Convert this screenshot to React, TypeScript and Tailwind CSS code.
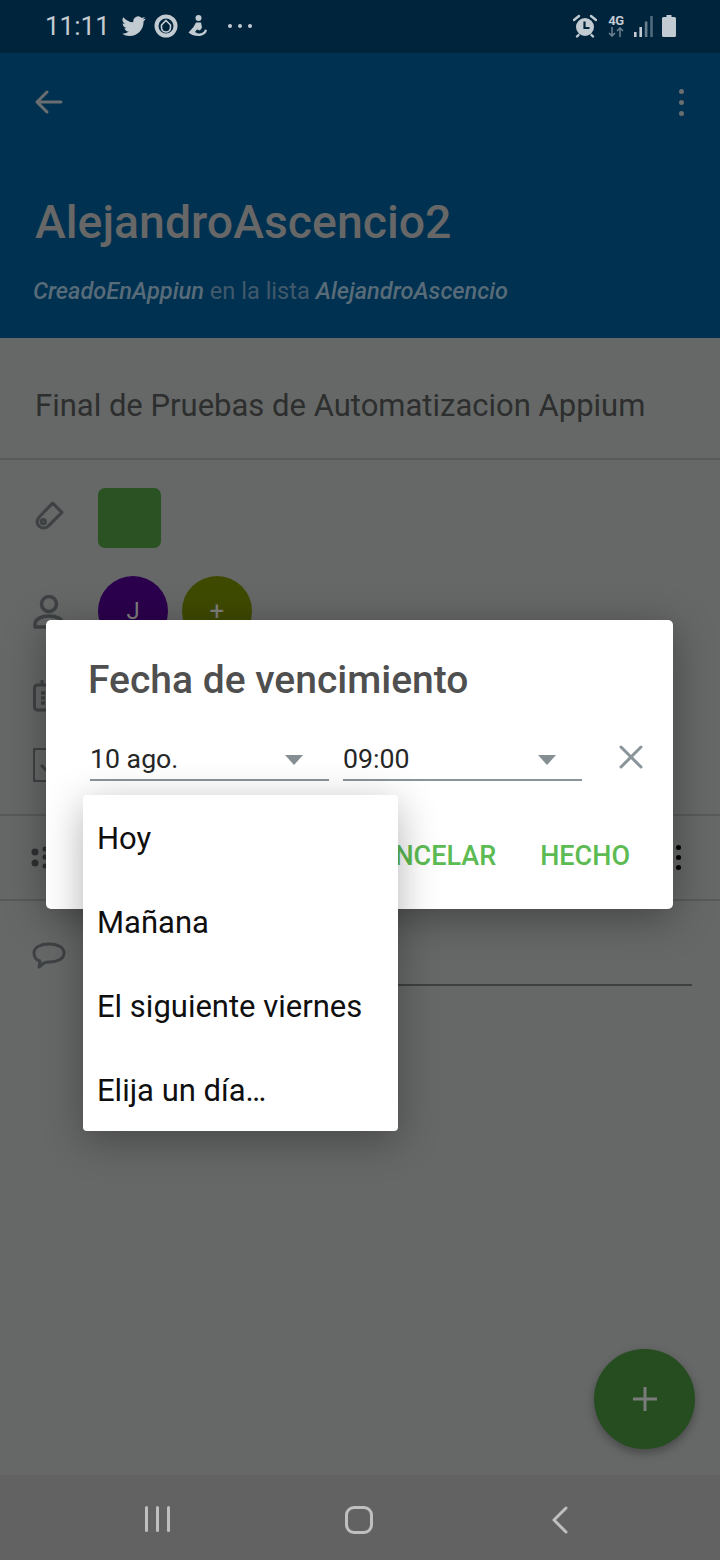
const menuItems = ['Hoy', 'Mañana', 'El siguiente viernes', 'Elija un día…'];

function TwitterIcon() {
  return (
    <svg width="24" height="24" viewBox="0 0 24 24" fill="#c3cbd2">
      <path d="M23.500 4.600c-.9.400-1.800.650-2.800.800 1-.6 1.750-1.550 2.100-2.700-.95.550-2 .95-3.100 1.200a4.900 4.900 0 0 0-8.350 4.450C7.300 8.150 3.700 6.200 1.300 3.250a4.900 4.900 0 0 0 1.500 6.550c-.8 0-1.550-.25-2.200-.6v.05c0 2.400 1.700 4.400 3.950 4.850-.7.200-1.500.2-2.200.1.600 1.950 2.450 3.400 4.600 3.400A9.900 9.900 0 0 1 0 19.650 13.900 13.900 0 0 0 7.550 21.900c9.050 0 14-7.500 14-14v-.6c.95-.7 1.800-1.550 1.950-2.700z" />
    </svg>
  );
}

function ChatAppIcon() {
  return (
    <svg width="24" height="24" viewBox="0 0 24 24" fill="none">
      <circle cx="12" cy="12" r="9.500" stroke="#c3cbd2" strokeWidth="4" />
      <path d="M12 6.500l4.500 4.500v2.500a4.500 4.500 0 0 1-9 0V11z" stroke="#c3cbd2" strokeWidth="1.600" fill="none" />
    </svg>
  );
}

function PersonAppIcon() {
  return (
    <svg width="20" height="24" viewBox="0 0 20 24" fill="#c3cbd2">
      <circle cx="10.500" cy="4" r="3" />
      <path d="M8 8.500h5l1 5-2 3-3-1-2 2.500 3 1.500c3 .5 6-1 7-4l2 .5c-.5 3.500-4 6-8.500 6-3.500 0-7.500-1-10-3.500l5-5.500z" />
    </svg>
  );
}

function AlarmIcon() {
  return (
    <svg width="24" height="24" viewBox="0 0 24 24" fill="none">
      <path d="M1 6l5-4M23 6l-5-4" stroke="#c3cbd2" strokeWidth="2.400" strokeLinecap="round" />
      <path d="M5.500 21l-1.500 1.500M18.500 21l1.500 1.500" stroke="#c3cbd2" strokeWidth="2.400" strokeLinecap="round" />
      <circle cx="12" cy="13" r="9" fill="#c3cbd2" />
      <path d="M11.500 7.500V14h5" stroke="#00243c" strokeWidth="2.200" />
    </svg>
  );
}

function SignalBars() {
  return (
    <svg width="19" height="21" viewBox="0 0 19 21">
      <rect x="0" y="16" width="2.600" height="5" fill="#c3cbd2" />
      <rect x="5.400" y="11" width="2.600" height="10" fill="#c3cbd2" />
      <rect x="10.800" y="5.500" width="2.600" height="15.500" fill="#6d8090" />
      <rect x="16.200" y="0" width="2.600" height="21" fill="#4f6a7d" />
    </svg>
  );
}

function BatteryIcon() {
  return (
    <svg width="14" height="22" viewBox="0 0 14 22" fill="#c3cbd2">
      <path d="M4.500 0h5v2H12.500a1.500 1.500 0 0 1 1.500 1.500V20.500a1.500 1.500 0 0 1-1.500 1.500H1.500A1.500 1.500 0 0 1 0 20.500V3.500A1.500 1.500 0 0 1 1.500 2H4.500z" />
    </svg>
  );
}

function NetworkBadge() {
  return (
    <div className="flex flex-col items-center w-[16px]">
      <span className="text-[13px] leading-[12px] font-bold text-[#c3cbd2] tracking-[-0.5px]">4G</span>
      <svg width="16" height="10" viewBox="0 0 16 10" fill="none" stroke="#6d8090" strokeWidth="1.500">
        <path d="M4 0v9M1 6l3 3 3-3M12 10V1M9 4l3-3 3 3" />
      </svg>
    </div>
  );
}

function StatusBar() {
  return (
    <div className="h-[53px] shrink-0 bg-[#00243c] flex items-center justify-between pl-[45px] pr-[44px] pb-[1px]">
      <div className="flex items-center">
        <span className="text-[26px] text-[#c3cbd2] w-[77px]">11:11</span>
        <TwitterIcon />
        <div className="ml-[8px]"><ChatAppIcon /></div>
        <div className="ml-[10px]"><PersonAppIcon /></div>
        <div className="ml-[20px] flex gap-[6px]">
          <div className="w-[4px] h-[4px] rounded-full bg-[#c3cbd2]" />
          <div className="w-[4px] h-[4px] rounded-full bg-[#c3cbd2]" />
          <div className="w-[4px] h-[4px] rounded-full bg-[#c3cbd2]" />
        </div>
      </div>
      <div className="flex items-center">
        <AlarmIcon />
        <div className="ml-[11px]"><NetworkBadge /></div>
        <div className="ml-[10px]"><SignalBars /></div>
        <div className="ml-[9px]"><BatteryIcon /></div>
      </div>
    </div>
  );
}

function Header() {
  return (
    <div className="h-[285px] shrink-0 bg-[#003150] px-[36px] flex flex-col">
      <div className="h-[98px] flex items-center justify-between">
        <svg width="30" height="26" viewBox="0 0 30 26" fill="none" stroke="#6b6e70" strokeWidth="3" strokeLinecap="round" strokeLinejoin="round" className="ml-[-2px]">
          <path d="M27 13H3M13 3L3 13l10 10" />
        </svg>
        <div className="flex flex-col gap-[6px]">
          <div className="w-[5px] h-[5px] rounded-full bg-[#6b6e70]" />
          <div className="w-[5px] h-[5px] rounded-full bg-[#6b6e70]" />
          <div className="w-[5px] h-[5px] rounded-full bg-[#6b6e70]" />
        </div>
      </div>
      <div className="mt-[41px] text-[46.400px] leading-[60px] font-medium text-[#676767] ml-[-1px]">AlejandroAscencio2</div>
      <div className="mt-[24px] text-[23.600px] leading-[30px] text-[#42596c] ml-[-3px]">
        <span className="italic font-medium text-[#586b78]">CreadoEnAppiun</span> en la lista{' '}
        <span className="italic font-medium text-[#586b78]">AlejandroAscencio</span>
      </div>
    </div>
  );
}

function Details() {
  return (
    <div className="flex-1 flex flex-col">
      <div className="h-[122px] shrink-0 border-b-2 border-[#585a59] flex items-center pl-[35px] pt-[17px]">
        <span className="text-[31px] text-[#2d2e2e]">Final de Pruebas de Automatizacion Appium</span>
      </div>

      <div className="flex items-start pl-[33px] pt-[28px] h-[88px] shrink-0">
        <svg width="31" height="31" viewBox="0 0 30 30" fill="none" stroke="#3f4244" strokeWidth="3" strokeLinejoin="round" className="mt-[13px]">
          <path d="M19 2l9 9-13 13c-2.500 2.500-6 3-9 .5-3-3-2-6.500 0-9z" />
          <circle cx="10" cy="20" r="2" />
        </svg>
        <div className="ml-[34px] w-[63px] h-[60px] rounded-[7px] bg-[#2a5223]" />
      </div>

      <div className="flex flex-col pl-[33px] h-[266px] shrink-0">
        <div className="flex items-start h-[114px] shrink-0 pt-[28px]">
          <svg width="32" height="34" viewBox="0 0 32 34" fill="none" stroke="#3f4244" strokeWidth="3.500" className="mt-[19px]">
            <circle cx="16" cy="9" r="7.500" />
            <path d="M2 32v-3c0-5 7-8 14-8s14 3 14 8v3z" strokeLinejoin="round" />
          </svg>
          <div className="ml-[33px] w-[70px] h-[70px] rounded-full bg-[#2b004d] flex items-center justify-center text-[24px] text-[#7f7f7f]">J</div>
          <div className="ml-[14px] w-[70px] h-[70px] rounded-full bg-[#3f4a00] flex items-center justify-center text-[26px] text-[#7f7f7f]">+</div>
        </div>
        <div className="h-[68px] shrink-0 pt-[18px]">
          <svg width="30" height="32" viewBox="0 0 30 32" fill="none" stroke="#3f4244" strokeWidth="3" strokeLinejoin="round">
            <rect x="1.500" y="5" width="27" height="25" rx="3" />
            <path d="M9 0v6M21 0v6" />
            <path d="M8 13h4M8 18h4M8 23h4" strokeWidth="3.500" />
          </svg>
        </div>
        <div className="h-[84px] shrink-0 pt-[18px]">
          <svg width="34" height="34" viewBox="0 0 34 34" fill="none" stroke="#3f4244" strokeWidth="3" strokeLinejoin="round">
            <rect x="0.500" y="0.500" width="31" height="33" rx="3" />
            <path d="M8 17l6 6 10-11" />
          </svg>
        </div>
      </div>

      <div className="h-[87px] shrink-0 border-y-2 border-[#585a59] flex items-center justify-between pl-[31px] pr-[39px]">
        <svg width="30" height="24" viewBox="0 0 30 24" fill="#2f3132">
          <circle cx="4" cy="6" r="3.500" />
          <circle cx="4" cy="17" r="3.500" />
          <circle cx="14" cy="3" r="2.500" />
          <circle cx="14" cy="11" r="2.500" />
          <circle cx="14" cy="20" r="2.500" />
        </svg>
        <div className="flex flex-col gap-[5px]">
          <div className="w-[5px] h-[5px] rounded-full bg-black" />
          <div className="w-[5px] h-[5px] rounded-full bg-black" />
          <div className="w-[5px] h-[5px] rounded-full bg-black" />
        </div>
      </div>

      <div className="flex items-start pl-[32px] pr-[28px] pt-[41px]">
        <svg width="34" height="28" viewBox="0 0 34 28" fill="none" stroke="#3f4244" strokeWidth="3" strokeLinejoin="round">
          <path d="M17 2c8 0 15 3 15 9s-7 9-14 9c-3 0-4 0-6 1l-5 4 1-6c-4-1-6-4-6-8 0-6 7-9 15-9z" />
        </svg>
        <div className="ml-[32px] flex-1 h-[44px] border-b-2 border-[#3d3f40] text-[31px] leading-[38px] text-[#3d3f40]">Añadir un comentario</div>
      </div>
    </div>
  );
}

function NavBar() {
  return (
    <div className="h-[85px] shrink-0 bg-[#626262] flex items-start pt-[31px]">
      <div className="w-[320px] flex justify-center">
        <div className="flex gap-[8px] mr-[6px]">
          <div className="w-[3px] h-[26px] rounded-full bg-[#bfbfbf]" />
          <div className="w-[3px] h-[26px] rounded-full bg-[#bfbfbf]" />
          <div className="w-[3px] h-[26px] rounded-full bg-[#bfbfbf]" />
        </div>
      </div>
      <div className="w-[28px] h-[28px] ml-[25px] rounded-[9px] border-[3px] border-[#bfbfbf]" />
      <svg width="18" height="28" viewBox="0 0 18 28" fill="none" stroke="#bfbfbf" strokeWidth="3" strokeLinecap="round" strokeLinejoin="round" className="ml-[178px]">
        <path d="M15 2L3 14l12 12" />
      </svg>
    </div>
  );
}

function DateDialog() {
  return (
    <div className="absolute left-[46px] top-[620px] w-[627px] h-[289px] bg-white rounded-[5px] shadow-[0_8px_40px_rgba(0,0,0,0.35)] pl-[43px] pr-[29px]">
      <div className="mt-[36px] text-[39px] leading-[48px] font-medium text-[#4f4f4f] ml-[-1px]">Fecha de vencimiento</div>
      <div className="mt-[31px] flex items-start">
        <div className="ml-[1px] w-[239px] h-[46px] border-b-2 border-[#8a9599] flex items-center justify-between pr-[26px] pt-[5px]">
          <span className="text-[26.700px] text-[#262626]">10 ago.</span>
          <div className="w-0 h-0 border-x-[9px] border-x-transparent border-t-[10px] border-t-[#858f93]" />
        </div>
        <div className="ml-[14px] w-[239px] h-[46px] border-b-2 border-[#8a9599] flex items-center justify-between pr-[26px] pt-[5px]">
          <span className="text-[26.700px] text-[#262626]">09:00</span>
          <div className="w-0 h-0 border-x-[9px] border-x-transparent border-t-[10px] border-t-[#858f93]" />
        </div>
        <svg width="24" height="24" viewBox="0 0 24 24" fill="none" stroke="#8a9599" strokeWidth="3" strokeLinecap="round" className="ml-[37px] mt-[10px]">
          <path d="M2 2l20 20M22 2L2 22" />
        </svg>
      </div>
      <div className="mt-[60px] flex justify-end items-center gap-[44px] text-[27px] font-medium text-[#5cbb52] leading-[30px]">
        <span>CANCELAR</span>
        <span className="mr-[14px]">HECHO</span>
      </div>
    </div>
  );
}

function DateMenu() {
  return (
    <div className="absolute left-[83px] top-[795px] w-[315px] bg-white rounded-[4px] shadow-[0_10px_40px_rgba(0,0,0,0.3)] flex flex-col">
      {menuItems.map((item) => (
        <div key={item} className="h-[84px] flex items-center pl-[14px] pt-[4px] text-[31px] text-[#0f0f0f]">
          {item}
        </div>
      ))}
    </div>
  );
}

export default function App() {
  return (
    <div className="relative w-[720px] h-[1560px] overflow-hidden flex flex-col bg-[#666867] font-['Roboto',sans-serif]">
      <StatusBar />
      <Header />
      <Details />
      <NavBar />

      <div className="absolute left-[594px] top-[1349px] w-[101px] h-[100px] rounded-full bg-[#264d20] shadow-[0_4px_10px_rgba(0,0,0,0.3)] flex items-center justify-center">
        <svg width="26" height="26" viewBox="0 0 26 26" stroke="#7a7c7b" strokeWidth="3">
          <path d="M13 1v24M1 13h24" />
        </svg>
      </div>

      <DateDialog />
      <DateMenu />
    </div>
  );
}
